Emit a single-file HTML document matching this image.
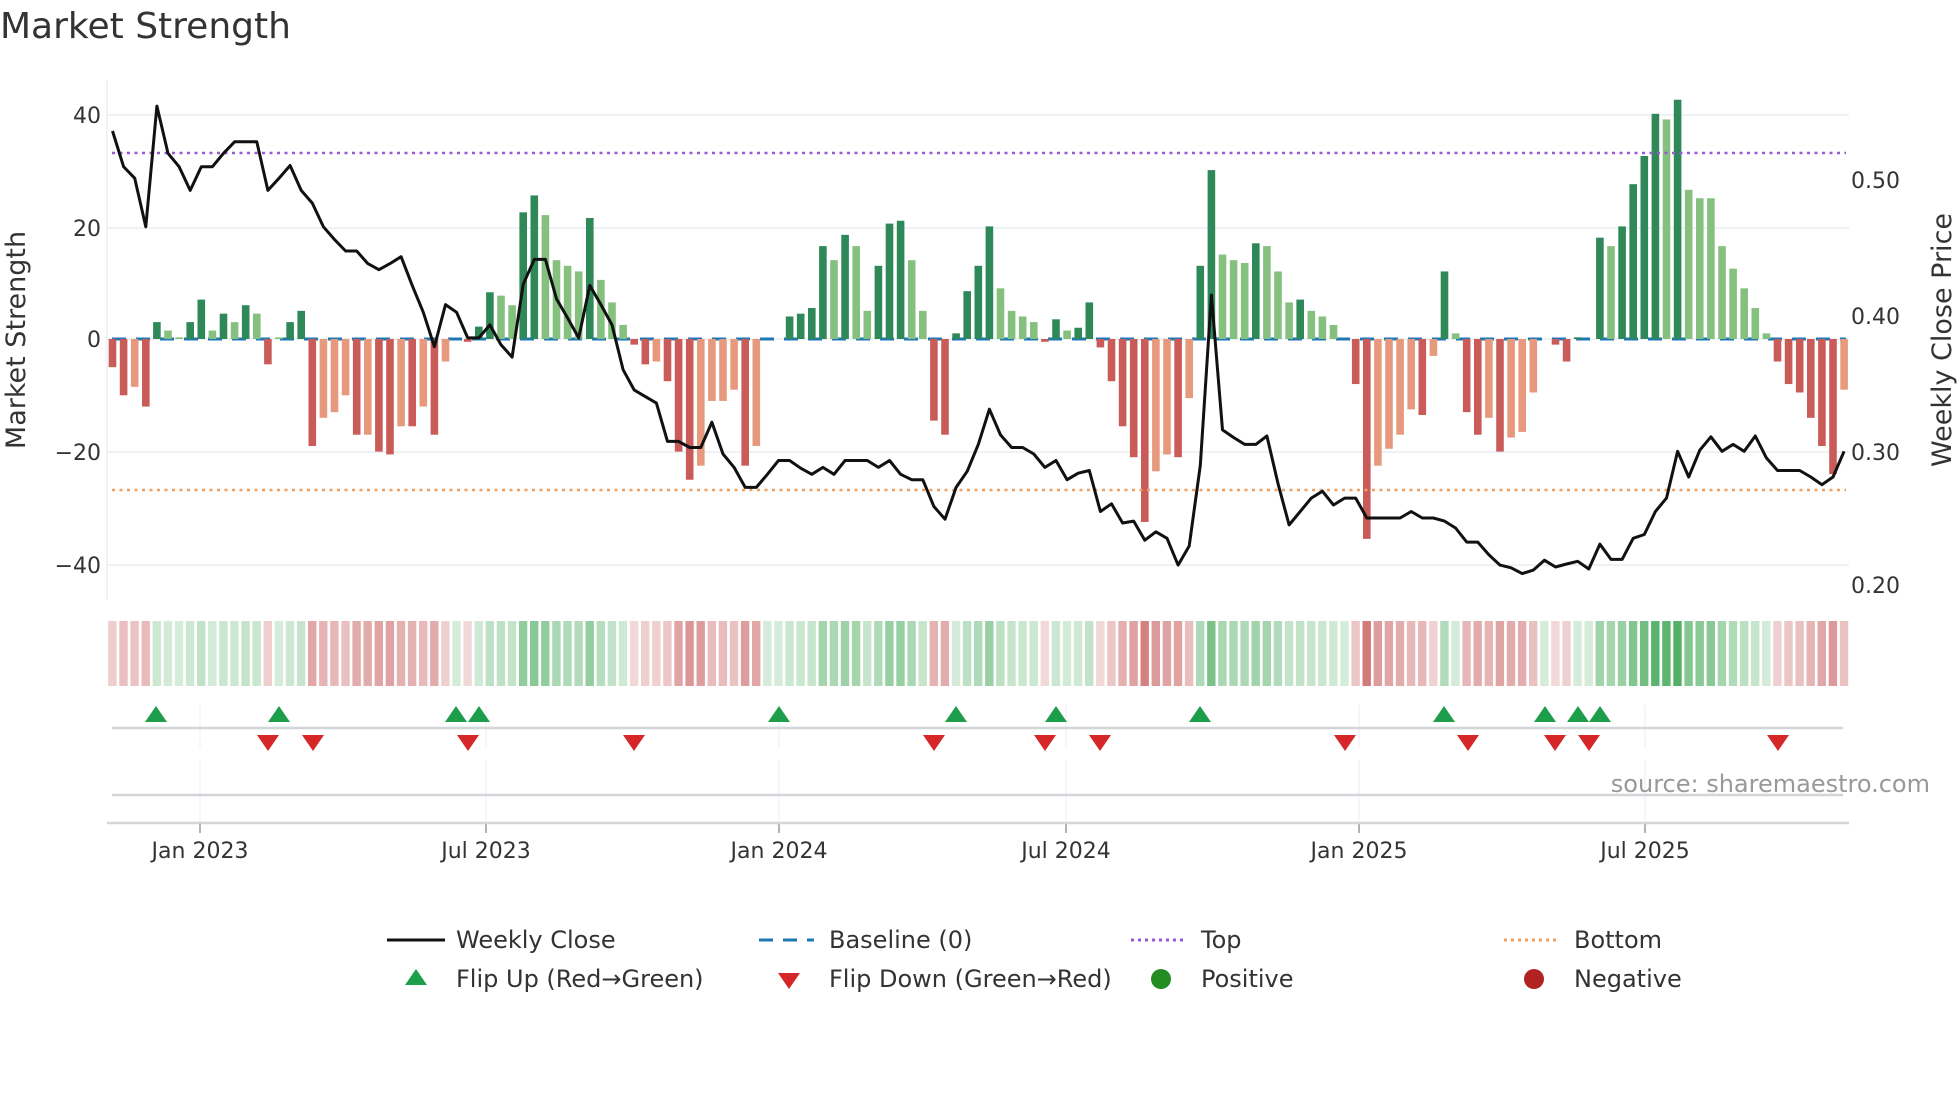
<!DOCTYPE html>
<html><head><meta charset="utf-8"><style>
html,body{margin:0;padding:0;background:#fff;width:1960px;height:1102px;overflow:hidden}
svg{display:block}
text{font-family:"DejaVu Sans","Liberation Sans",sans-serif;fill:#333}
</style></head><body>
<svg id="s" width="1960" height="1102" viewBox="0 0 1960 1102" xmlns="http://www.w3.org/2000/svg">
<g id="grid"></g>
<g id="bars"></g>
<g id="lines"></g>
<text x="0" y="38" font-size="36">Market Strength</text>
<g font-size="22" text-anchor="end">
<text x="101" y="123">40</text><text x="101" y="236">20</text><text x="101" y="347">0</text>
<text x="101" y="460">−20</text><text x="101" y="573">−40</text>
</g>
<g font-size="22">
<text x="1851" y="188">0.50</text><text x="1851" y="324">0.40</text>
<text x="1851" y="460">0.30</text><text x="1851" y="593">0.20</text>
</g>
<text transform="translate(25,340) rotate(-90)" font-size="27" text-anchor="middle">Market Strength</text>
<text transform="translate(1951,340) rotate(-90)" font-size="27" text-anchor="middle">Weekly Close Price</text>
<text x="1930" y="792" font-size="24" text-anchor="end" style="fill:#999">source: sharemaestro.com</text>
<g font-size="22" text-anchor="middle">
<text x="200" y="858">Jan 2023</text><text x="486" y="858">Jul 2023</text><text x="779" y="858">Jan 2024</text>
<text x="1066" y="858">Jul 2024</text><text x="1359" y="858">Jan 2025</text><text x="1645" y="858">Jul 2025</text>
</g>
<g font-size="24">
<line x1="387" y1="940" x2="445" y2="940" stroke="#111" stroke-width="3"/>
<text x="456" y="948">Weekly Close</text>
<line x1="759" y1="940" x2="814" y2="940" stroke="#1f77b4" stroke-width="3" stroke-dasharray="14,10"/>
<text x="829" y="948">Baseline (0)</text>
<line x1="1131" y1="940" x2="1185" y2="940" stroke="#9b59d6" stroke-width="3" stroke-dasharray="3,4"/>
<text x="1201" y="948">Top</text>
<line x1="1504" y1="940" x2="1559" y2="940" stroke="#f0a060" stroke-width="3" stroke-dasharray="3,4"/>
<text x="1574" y="948">Bottom</text>
<polygon points="416,969 427,985 405,985" fill="#1e9e4a"/>
<text x="456" y="987">Flip Up (Red→Green)</text>
<polygon points="778,973 800,973 789,989" fill="#d62728"/>
<text x="829" y="987">Flip Down (Green→Red)</text>
<circle cx="1161" cy="979" r="10" fill="#228b22"/>
<text x="1201" y="987">Positive</text>
<circle cx="1534" cy="979" r="10" fill="#b22222"/>
<text x="1574" y="987">Negative</text>
</g>
</svg>
<script>
const V=[-5,-10,-8.5,-12,3,1.5,0.3,3,7,1.5,4.5,3,6,4.5,-4.5,0.3,3,5,-19,-14,-13,-10,-17,-17,-20,-20.5,-15.5,-15.5,-12,-17,-4,0,-0.5,2.2,8.3,7.7,6,22.5,25.5,22,14,13,12,21.5,10.5,6.5,2.5,-1,-4.5,-4,-7.5,-20,-25,-22.5,-11,-11,-9,-22.5,-19,0,0,4,4.5,5.5,16.5,14,18.5,16.5,5,13,20.5,21,14,5,-14.5,-17,1,8.5,13,20,9,5,4,3,-0.5,3.5,1.5,2,6.5,-1.5,-7.5,-15.5,-21,-32.5,-23.5,-20.5,-21,-10.5,13,30,15,14,13.5,17,16.5,12,6.5,7,5,4,2.5,0,-8,-35.5,-22.5,-19.5,-17,-12.5,-13.5,-3,12,1,-13,-17,-14,-20,-17.5,-16.5,-9.5,0,-1,-4,0.3,0,18,16.5,20,27.5,32.5,40,39,42.5,26.5,25,25,16.5,12.5,9,5.5,1,-4,-8,-9.5,-14,-19,-24,-9];
const C="RRSR"+"DLLDDLDLDLRLDD"+"RSSSRSRRSRSRS"+"RR"+"DDLLDDLLLLDLLL"+"RRSRRRSSSSRS"+"RR"+"DDDDLDLLDDDLL"+"RRDDD"+"DLLLLRDLDD"+"RRRRRSSRS"+"DDLLLDLLLDLLLR"+"RRSSSSRS"+"DL"+"RRSRSSSRRRDD"+"DLDDDDLD"+"LLLLLLLL"+"RRRRRRS";
const P1=[342,435,465,592,277,400,435,497,435,435,400,370,370,370,497,465,432,497,530,592,625,655,655,688,704,688,670,745,815,905,795,815,882,882,848,900,932,742,677,677,780,830,882,745,795,848,965,1018,1035,1052,1152,1152,1168,1168,1102,1185,1220,1272,1272,1238,1202,1202,1222,1238,1220,1238,1202,1202,1202,1220,1202,1238,1252,1252,1322,1355,1272,1230,1160];
const P2=[1068,1135,1168,1168,1185,1220,1202,1252,1235,1228,1335,1315,1365,1360,1410,1388,1405,1475,1425,1215,770,1122,1142,1160,1160,1138,1262,1370,1335,1300,1282,1318,1300,1300,1352,1352,1352,1352,1335,1352,1352,1360,1378,1415,1415,1448,1475,1482,1497,1488,1462,1480,1472,1465,1485,1420,1460,1460,1405,1395,1335,1300,1178,1245,1175,1140,1178,1160,1178,1138,1195,1228,1228,1228,1245,1265,1245,1178];
const P=P1.concat(P2).map(v=>v/2.61);
const ns="http://www.w3.org/2000/svg";
function el(g,t,a){const e=document.createElementNS(ns,t);for(const k in a)e.setAttribute(k,a[k]);document.getElementById(g).appendChild(e);return e;}
const X=i=>112.5+i*11.1, Y0=339, K=5.63;
[115,228,339,452,565].forEach(y=>el('grid','line',{x1:107,x2:1849,y1:y,y2:y,stroke:'#e9edf0','stroke-width':1.5}));
el('grid','line',{x1:107,x2:107,y1:80,y2:600,stroke:'#eceff1','stroke-width':1.5});
[200,486,779,1066,1359,1645].forEach(x=>{
 el('grid','line',{x1:x,x2:x,y1:705,y2:748,stroke:'#eef0f2','stroke-width':1.2});
 el('grid','line',{x1:x,x2:x,y1:760,y2:823,stroke:'#eef0f2','stroke-width':1.2});
 el('grid','line',{x1:x,x2:x,y1:823,y2:833,stroke:'#999','stroke-width':1.5});
});
el('grid','line',{x1:112,x2:1843,y1:728,y2:728,stroke:'#d3d6d9','stroke-width':2.5});
el('grid','line',{x1:112,x2:1843,y1:795,y2:795,stroke:'#d3d6d9','stroke-width':2.5});
el('grid','line',{x1:107,x2:1849,y1:823,y2:823,stroke:'#d3d6d9','stroke-width':2.5});
el('grid','line',{x1:112,x2:1846,y1:Y0,y2:Y0,stroke:'#1f77b4','stroke-width':3,'stroke-dasharray':'14,10'});
const col={D:'#2e8857',L:'#85c07f',R:'#c95b58',S:'#e6997c'};
V.forEach((v,i)=>{
 const h=Math.abs(v)*K, x=X(i)-3.8;
 if(h>0.3) el('bars','rect',{x:x,width:7.6,y:v>0?Y0-h:Y0,height:h,fill:col[C[i]]||'#888'});
 const a=Math.min(1,0.22+Math.abs(v)/45*0.75);
 const f=v>=0?`rgba(70,170,90,${a})`:`rgba(200,90,90,${a})`;
 el('bars','rect',{x:X(i)-4.3,width:8.4,y:621,height:65,fill:f});
});
el('lines','line',{x1:112,x2:1846,y1:153,y2:153,stroke:'#9b59d6','stroke-width':2.5,'stroke-dasharray':'3,4.5'});
el('lines','line',{x1:112,x2:1846,y1:490,y2:490,stroke:'#f0a060','stroke-width':2.5,'stroke-dasharray':'3,4.5'});
el('lines','polyline',{points:P.map((y,i)=>X(i).toFixed(1)+','+y.toFixed(1)).join(' '),fill:'none',stroke:'#111','stroke-width':3,'stroke-linejoin':'round'});
[156,279,456,479,779,956,1056,1200,1444,1545,1578,1600].forEach(x=>el('lines','polygon',{points:`${x},706 ${x+11},722 ${x-11},722`,fill:'#1e9e4a'}));
[268,313,468,634,934,1045,1100,1345,1468,1555,1589,1778].forEach(x=>el('lines','polygon',{points:`${x-11},735 ${x+11},735 ${x},751`,fill:'#d62728'}));
</script>
</body></html>
